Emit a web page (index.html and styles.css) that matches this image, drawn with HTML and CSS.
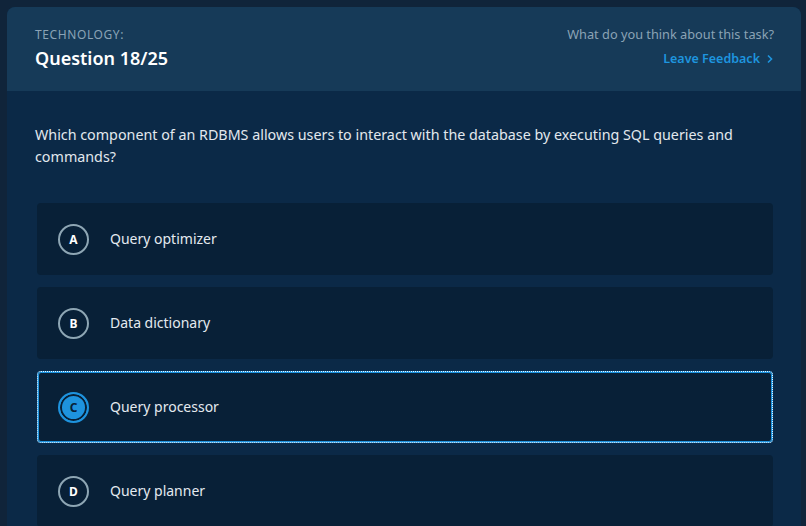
FILE: index.html
```html
<!DOCTYPE html>
<html lang="en">
<head>
<meta charset="utf-8">
<title>Question 18/25</title>
<link rel="stylesheet" href="styles.css">
</head>
<body>
<div class="card">
  <header class="head">
    <div class="head-left">
      <div class="cat">TECHNOLOGY:</div>
      <h1 class="title">Question 18/25</h1>
    </div>
    <div class="head-right">
      <div class="ask">What do you think about this task?</div>
      <a class="feedback" href="#">Leave Feedback <svg width="8" height="10" viewBox="0 0 8 10"><path d="M2 1.5 L5.5 5 L2 8.5" fill="none" stroke="currentColor" stroke-width="1.6"/></svg></a>
    </div>
  </header>
  <main class="body">
    <p class="question">Which component of an RDBMS allows users to interact with the database by executing SQL queries and commands?</p>
    <div class="options">
      <div class="option"><span class="letter">A</span><span class="label">Query optimizer</span></div>
      <div class="option"><span class="letter">B</span><span class="label">Data dictionary</span></div>
      <div class="option selected"><span class="letter">C</span><span class="label">Query processor</span></div>
      <div class="option"><span class="letter">D</span><span class="label">Query planner</span></div>
    </div>
  </main>
</div>
</body>
</html>
```
FILE: styles.css
```css
html, body {
  margin: 0;
  padding: 0;
  height: 100%;
  overflow: hidden;
}
body {
  background: #10243a;
  font-family: "Noto Sans", "Open Sans", sans-serif;
  color: #e4eaef;
}
.card {
  margin: 7px 5px 0 7px;
  border-radius: 8px 8px 0 0;
  overflow: hidden;
  background: #0b2947;
  height: 600px;
}
.head {
  background: #163a58;
  height: 84px;
  padding: 0 27px 0 28px;
  display: flex;
  justify-content: space-between;
  box-sizing: border-box;
}
.head-left {
  padding-top: 19px;
}
.cat {
  font-size: 12px;
  line-height: 17px;
  letter-spacing: 0.6px;
  color: #8aa3b6;
}
.title {
  margin: 2px 0 0;
  font-size: 18px;
  line-height: 26px;
  font-weight: 600;
  color: #ffffff;
}
.head-right {
  padding-top: 18px;
  text-align: right;
}
.ask {
  font-size: 12.75px;
  line-height: 19px;
  color: #8ba3b5;
}
.feedback {
  display: inline-flex;
  align-items: center;
  gap: 6px;
  margin-top: 6px;
  font-size: 12.5px;
  line-height: 18px;
  font-weight: 600;
  color: #1e95df;
  text-decoration: none;
}
.feedback svg {
  display: block;
}
.body {
  padding: 33px 28px 0;
}
.question {
  margin: 0;
  font-size: 14.3px;
  line-height: 22px;
  color: #e2e8ee;
}
.options {
  margin: 35px 0 0 2px;
  display: flex;
  flex-direction: column;
  gap: 12px;
}
.option {
  height: 72px;
  box-sizing: border-box;
  background: #082037;
  border-radius: 4px;
  display: flex;
  align-items: center;
  padding-left: 21px;
  gap: 21px;
}
.letter {
  width: 31px;
  height: 31px;
  box-sizing: border-box;
  border: 2px solid #8ea6b4;
  border-radius: 50%;
  display: flex;
  align-items: center;
  justify-content: center;
  font-size: 12px;
  font-weight: 700;
  color: #ffffff;
}
.label {
  font-size: 14px;
  line-height: 20px;
  margin-top: -1px;
  color: #e4eaef;
}
.option.selected {
  border: 1px dotted #eaf5ff;
  background: linear-gradient(#082037, #082037) padding-box, #1e93de border-box;
  box-shadow: inset 0 0 0 1px #1e93de;
  padding-left: 20px;
}
.option.selected .letter {
  border-color: #1e93de;
  background: #1e93de;
  box-shadow: inset 0 0 0 2px #082037;
  color: #082037;
  font-size: 12px;
}
```
